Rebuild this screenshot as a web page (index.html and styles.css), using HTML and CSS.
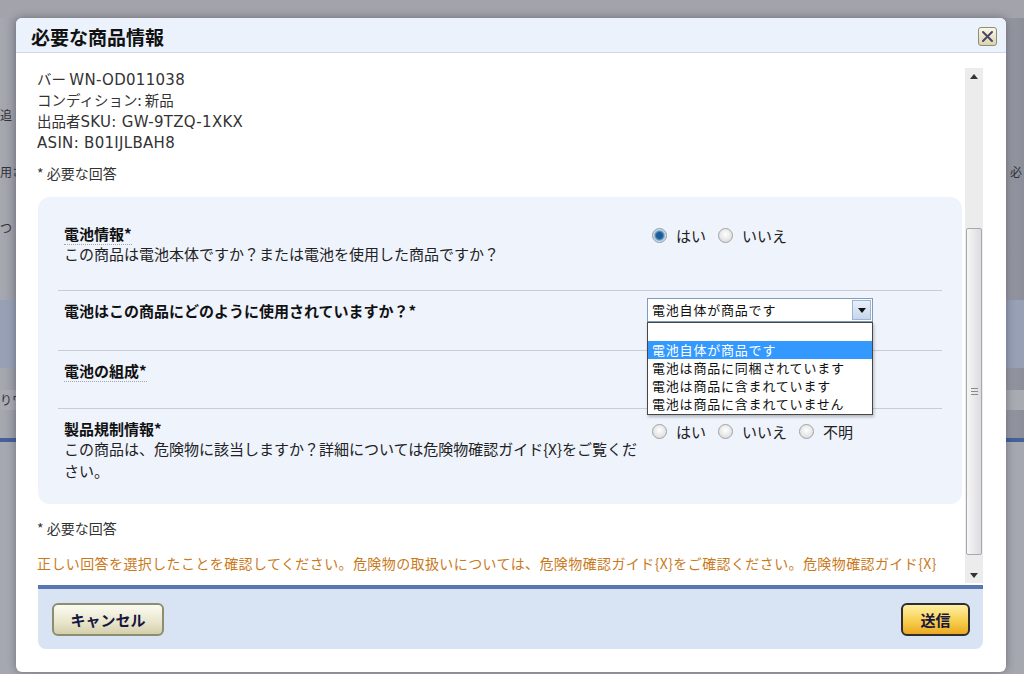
FILE: index.html
```html
<!DOCTYPE html>
<html lang="ja">
<head>
<meta charset="utf-8">
<title>必要な商品情報</title>
<link rel="stylesheet" href="styles.css">
</head>
<body>
<div class="page">
  <div class="page-top"></div>
  <div class="prow r1"><span class="pl">追</span><span class="pr"></span></div>
  <div class="prow r2"><span class="pl">用さ</span><span class="pr">必</span></div>
  <div class="prow r3"><span class="pl">つ</span><span class="pr"></span></div>
  <div class="pband"></div>
  <div class="prow r4"><span class="pl">りワ</span><span class="pr"></span></div>
  <div class="pline"></div>
  <div class="prest"></div>
</div>

<div class="dialog">
  <div class="dlg-head">
    <h1 class="dlg-title">必要な商品情報</h1>
    <button class="close" aria-label="閉じる">
      <svg width="13" height="13" viewBox="0 0 13 13"><path d="M2 2 L11 11 M11 2 L2 11" stroke="#4b4763" stroke-width="2" stroke-linecap="round" fill="none"/></svg>
    </button>
  </div>
  <div class="dlg-body">
    <div class="scroll">
      <div class="content">
        <div class="info">
          <div class="iline">バー <span class="lat">WN-OD011038</span></div>
          <div class="iline">コンディション: 新品</div>
          <div class="iline">出品者<span class="lat">SKU: GW-9TZQ-1XKX</span></div>
          <div class="iline"><span class="lat">ASIN: B01IJLBAH8</span></div>
        </div>
        <p class="req">* 必要な回答</p>
        <div class="panel">
          <div class="row">
            <div class="q">
              <div class="qt"><span class="qtitle">電池情報*</span></div>
              <div class="qd">この商品は電池本体ですか？または電池を使用した商品ですか？</div>
            </div>
            <div class="a">
              <div class="radios">
                <span class="opt"><span class="radio on"></span>はい</span>
                <span class="opt"><span class="radio"></span>いいえ</span>
              </div>
            </div>
          </div>
          <div class="row">
            <div class="q">
              <div class="qt"><span class="qtitle plain">電池はこの商品にどのように使用されていますか？*</span></div>
            </div>
            <div class="a">
              <div class="select">
                <span class="sel-text">電池自体が商品です</span>
                <span class="sel-btn"><svg width="8" height="5" viewBox="0 0 8 5"><path d="M0 0 H8 L4 5 Z" fill="#111"/></svg></span>
                <ul class="list">
                  <li class="blank"></li>
                  <li class="sel">電池自体が商品です</li>
                  <li>電池は商品に同梱されています</li>
                  <li>電池は商品に含まれています</li>
                  <li>電池は商品に含まれていません</li>
                </ul>
              </div>
            </div>
          </div>
          <div class="row">
            <div class="q">
              <div class="qt"><span class="qtitle">電池の組成*</span></div>
            </div>
            <div class="a"></div>
          </div>
          <div class="row">
            <div class="q">
              <div class="qt"><span class="qtitle plain">製品規制情報*</span></div>
              <div class="qd">この商品は、危険物に該当しますか？詳細については危険物確認ガイド{X}をご覧ください。</div>
            </div>
            <div class="a">
              <div class="radios low">
                <span class="opt"><span class="radio"></span>はい</span>
                <span class="opt"><span class="radio"></span>いいえ</span>
                <span class="opt"><span class="radio"></span>不明</span>
              </div>
            </div>
          </div>
        </div>
        <p class="req req2">* 必要な回答</p>
        <p class="warn">正しい回答を選択したことを確認してください。危険物の取扱いについては、危険物確認ガイド{X}をご確認ください。危険物確認ガイド{X}</p>
      </div>
      <div class="scrollbar">
        <div class="sb-btn"><svg width="8" height="5" viewBox="0 0 8 5"><path d="M0 5 H8 L4 0 Z" fill="#333"/></svg></div>
        <div class="sb-track">
          <div class="thumb"><svg width="7" height="9" viewBox="0 0 7 9"><path d="M0 1.5 H7 M0 4.5 H7 M0 7.5 H7" stroke="#8a8a8a" stroke-width="1"/></svg></div>
        </div>
        <div class="sb-btn"><svg width="8" height="5" viewBox="0 0 8 5"><path d="M0 0 H8 L4 5 Z" fill="#333"/></svg></div>
      </div>
    </div>
    <div class="dlg-foot">
      <button class="btn btn-cancel">キャンセル</button>
      <button class="btn btn-submit">送信</button>
    </div>
  </div>
</div>
</body>
</html>
```

FILE: styles.css
```css
* { box-sizing: border-box; margin: 0; padding: 0; }
html, body { width: 1024px; height: 674px; overflow: hidden; }
body {
  position: relative;
  background: #a3a5ad;
  font-family: "Noto Sans CJK JP", "Noto Sans", sans-serif;
  color: #333;
}

/* background page under the modal overlay */
.page {
  height: 674px;
  display: flex;
  flex-direction: column;
  background: linear-gradient(90deg, #a7a9b1 0, #9c9ea8 16px, #9c9ea8 1000px, #8b8e98 1024px);
}
.page-top { height: 18px; background: #a2a3ab; }
.prow {
  height: 20px;
  display: flex;
  justify-content: space-between;
  font-size: 12px;
  line-height: 20px;
  color: #2f3039;
}
.prow .pr { margin-right: 2px; }
.r1 { margin-top: 87px; }
.r2 { margin-top: 37px; }
.r3 { margin-top: 36px; }
.pband { margin-top: 62px; height: 68px; background: #97a0b5; }
.r4 { margin-top: 22px; background: #a9abb3; }
.pline { margin-top: 28px; height: 4px; background: #46609c; }
.prest { flex: 1; background: #a6a8b0; }

/* dialog */
.dialog {
  position: absolute;
  left: 16px;
  top: 18px;
  width: 990px;
  height: 654px;
  background: #fff;
  border-radius: 6px;
  box-shadow: 0 0 9px rgba(40, 40, 50, 0.45);
  display: flex;
  flex-direction: column;
  overflow: hidden;
}
.dlg-head {
  height: 35px;
  flex: none;
  background: #ebf2fc;
  border-bottom: 1px solid #cddaec;
  display: flex;
  align-items: center;
  justify-content: space-between;
  padding: 3px 9px 0 15px;
}
.dlg-title {
  font-size: 19px;
  font-weight: 700;
  line-height: 24px;
  color: #111;
}
.close {
  width: 19px;
  height: 19px;
  border: 1px solid #8f8d72;
  border-radius: 3px;
  background: linear-gradient(#faf8e8, #d8d4b2);
  display: flex;
  align-items: center;
  justify-content: center;
}

.dlg-body {
  flex: 1;
  display: flex;
  flex-direction: column;
  padding-top: 15px;
}
.scroll {
  height: 515px;
  flex: none;
  display: flex;
  padding: 0 23px 0 21px;
}
.content { flex: 1; min-width: 0; }

.info {
  font-size: 14.5px;
  line-height: 21px;
  color: #333;
}
.iline { height: 21px; overflow: visible; white-space: nowrap; }
.info .lat {
  font-family: "DejaVu Sans", sans-serif;
  font-size: 15px;
  line-height: 1;
  letter-spacing: 0.3px;
}
.req {
  margin-top: 11px;
  font-size: 14px;
  line-height: 20px;
  color: #333;
}
.req2 { margin-top: 14px; }

.panel {
  margin: 14px 3px 0 1px;
  background: #eef3fc;
  border-radius: 12px;
  padding: 17px 20px 0 20px;
}
.row {
  display: grid;
  grid-template-columns: 589px 1fr;
  padding: 7px 0 28px;
  border-bottom: 1px solid #c7ccd6;
}
.row:first-child { padding-bottom: 25px; }
.row:last-child { border-bottom: 0; padding-bottom: 22px; }
.q { padding: 0 5px 0 6px; }
.qt { height: 22px; }
.qtitle {
  display: inline-block;
  font-size: 15px;
  font-weight: 700;
  line-height: 20px;
  color: #111;
  border-bottom: 1px dotted #a0a6b2;
}
.qtitle.plain { border-bottom-color: transparent; }
.qd {
  font-size: 15px;
  line-height: 22px;
  color: #222;
}

.a { position: relative; }
.radios {
  display: flex;
  align-items: center;
  height: 22px;
  margin-top: 3px;
  padding-left: 5px;
  font-size: 15px;
  color: #222;
}
.radios.low { margin-top: 4px; }
.opt { display: flex; align-items: center; margin-right: 12px; }
.radio {
  width: 15px;
  height: 15px;
  border-radius: 50%;
  border: 1px solid #a2a2a2;
  background: radial-gradient(circle at 50% 40%, #ffffff, #d4d4d4);
  margin-right: 9px;
}
.radio.on {
  border-color: #8e9aa8;
  background: radial-gradient(circle, #1c5c92 0, #1c5c92 3px, #6a9cc6 4.5px, #d5e1ee 6px);
}

.select {
  position: relative;
  width: 226px;
  height: 24px;
  border: 1px solid #7f9db9;
  background: #fff;
  display: flex;
}
.sel-text {
  flex: 1;
  font-size: 13px;
  line-height: 22px;
  padding-left: 4px;
  letter-spacing: 0.8px;
  color: #111;
}
.sel-btn {
  width: 19px;
  margin: 1px;
  border: 1px solid #9fb3cf;
  background: linear-gradient(#e9f0fa, #c6d6ed);
  display: flex;
  align-items: center;
  justify-content: center;
}
.list {
  position: absolute;
  top: 23px;
  left: -1px;
  width: 226px;
  list-style: none;
  border: 1px solid #474747;
  background: #fff;
  box-shadow: 1px 2px 3px rgba(0, 0, 0, 0.25);
  padding: 1px 0;
  z-index: 5;
}
.list li {
  height: 18px;
  font-size: 13px;
  line-height: 18px;
  padding-left: 4px;
  letter-spacing: 0.8px;
  color: #111;
  white-space: nowrap;
}
.list li.blank { height: 17px; }
.list li.sel { background: #3399ff; color: #fff; }

.warn {
  margin-top: 15px;
  font-size: 14px;
  line-height: 20px;
  letter-spacing: 0.4px;
  color: #c97a1d;
  white-space: nowrap;
}

.scrollbar {
  width: 18px;
  flex: none;
  background: #ececec;
  display: flex;
  flex-direction: column;
}
.sb-btn {
  height: 16px;
  display: flex;
  align-items: center;
  justify-content: center;
}
.sb-track { flex: 1; padding-top: 144px; }
.thumb {
  height: 327px;
  margin: 0 1px;
  border: 1px solid #a9a9ad;
  border-radius: 2px;
  background: linear-gradient(90deg, #f6f6f7, #dcdce0);
  display: flex;
  align-items: center;
  justify-content: center;
}

.dlg-foot {
  margin: 2px 23px 0 22px;
  height: 64px;
  border-top: 4px solid #5876b1;
  background: #d8e3f4;
  border-radius: 0 0 8px 8px;
  display: flex;
  justify-content: space-between;
  padding: 14px 13px 0 14px;
}
.btn {
  height: 33px;
  border-radius: 6px;
  font-family: "Noto Sans CJK JP", sans-serif;
  font-size: 15px;
  font-weight: 700;
  color: #16163e;
}
.btn-cancel {
  width: 112px;
  border: 2px solid #8d8e70;
  background: linear-gradient(#fcfbf2, #e8e5cb 60%, #d3cfac);
}
.btn-submit {
  width: 69px;
  border: 2px solid #2e2e2e;
  background: linear-gradient(#fff0a6, #f7cf4f 55%, #eba921);
}
```
